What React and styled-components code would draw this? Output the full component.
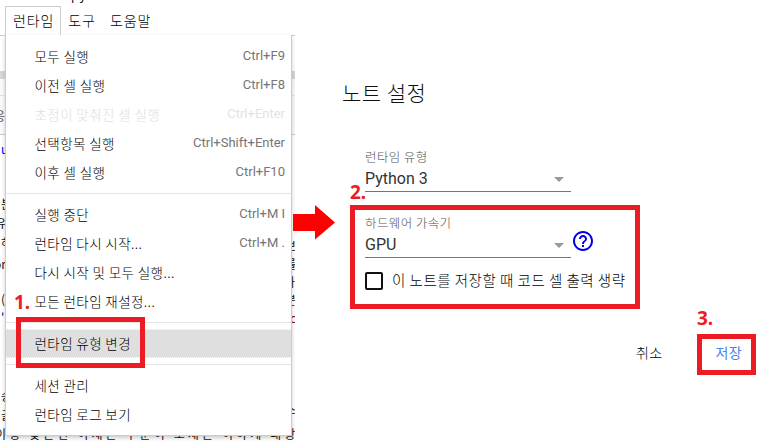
import React from "react";
import styled, { createGlobalStyle } from "styled-components";

const Global = createGlobalStyle`
  *{box-sizing:border-box}
  body{margin:0;background:#fff;overflow:hidden;font-family:Roboto,"Noto Sans CJK KR",sans-serif;font-size:13px;color:#212121}
`;
const Page = styled.main`
  position:relative;display:flex;width:759px;height:443px;overflow:hidden;background:#fff;
`;
const Korean = styled.span`
  font-family:"Noto Sans CJK KR",sans-serif;
  font-weight:${p => p.$weight || 300};
  font-size:${p => p.$size || 13.5}px;
  letter-spacing:${p => (p.$spacing === undefined ? 0.4 : p.$spacing)}px;
  white-space:nowrap;
`;
const Notebook = styled.section`
  position:relative;width:295px;height:443px;overflow:hidden;flex:none;
`;
const Backdrop = styled.div`
  position:absolute;inset:35px 0 0;border-top:1px solid #ccc;
`;
const Toolbar = styled.div`height:35px;`;
const Band = styled.div`height:8px;background:#d6d6d6;`;
const TabStrip = styled.div`height:56px;border-bottom:1px solid #ccc;background:#fafafa;padding-top:16px;`;
const TabLine = styled.div`border-top:1px solid #e4e4e4;`;
const CodeBit = styled.span`
  position:absolute;left:${p => p.$x}px;top:${p => p.$y}px;
  font:12px/14px "Noto Sans CJK KR",sans-serif;color:${p => p.$color || "#111"};white-space:nowrap;
  letter-spacing:${p => p.$spacing || 0}px;
`;
const TopBar = styled.nav`position:relative;display:flex;padding:6px 0 0 5px;height:36px;`;
const TopItem = styled.div`
  height:30px;line-height:26px;padding:0 6px 0 7px;color:#000;
  border:1px solid ${p => (p.$open ? "#ccc" : "transparent")};border-bottom:0;border-left-width:${p => (p.$open ? 1 : 0)}px;
  background:${p => (p.$open ? "#fff" : "none")};
`;
const Menu = styled.div`
  position:relative;width:287px;height:401px;margin:-1px 0 0 5px;padding:7px 0 6px;background:#fff;
  border:1px solid #ccc;border-top:0;box-shadow:0 2px 4px rgba(0,0,0,.2);
`;
const MenuItem = styled.div`
  display:flex;align-items:center;justify-content:space-between;height:29px;padding:0 6px 2px 28.5px;
  color:${p => (p.$disabled ? "#dedede" : "#000")};
  background:${p => (p.$active ? "#dfdfdf" : "transparent")};
  border:dotted ${p => (p.$active ? "#fff" : "transparent")};border-width:1px 0;
`;
const Shortcut = styled.span`font-size:13px;color:${p => (p.$disabled ? "#e2e2e2" : "#757575")};`;
const Divider = styled.div`height:1px;margin:6px 0;background:#e6e6e6;`;

const Dialog = styled.section`flex:1;display:flex;flex-direction:column;padding:76px 0 0 47px;`;
const Title = styled.h1`margin:0;height:32px;line-height:32px;font-weight:300;color:#111;`;
const Field = styled.div`
  width:206px;height:${p => p.$h}px;margin:${p => p.$top}px 0 0 23px;border-bottom:1px solid #757575;
`;
const FieldLabel = styled.div`height:18px;line-height:18px;color:#555;`;
const FieldValue = styled.div`
  display:flex;justify-content:space-between;align-items:center;height:25px;
  font-size:16px;color:#333;padding-right:7px;
`;
const Caret = styled.i`margin-top:2px;border:5px solid transparent;border-top-color:#999;border-bottom:0;`;
const FieldRow = styled.div`display:flex;align-items:flex-end;`;
const Help = styled.svg`width:24px;height:24px;margin:0 0 5px 0;`;
const CheckRow = styled.label`display:flex;align-items:center;gap:9px;margin:13px 0 0 23px;height:20px;line-height:17px;color:#000;`;
const CheckLabel = styled.span`padding-bottom:1px;`;
const Checkbox = styled.span`width:18px;height:18px;border:2px solid #111;border-radius:2px;flex:none;`;
const Actions = styled.div`display:flex;gap:53px;margin:51px 0 0 294px;height:20px;line-height:20px;`;
const Action = styled.span`color:${p => p.$color};`;

const Highlight = styled.div`
  position:absolute;left:${p => p.$x}px;top:${p => p.$y}px;width:${p => p.$w}px;height:${p => p.$h}px;
  border:5px solid #ed1c24;
`;
const Step = styled.div`
  position:absolute;left:${p => p.$x}px;top:${p => p.$y}px;color:#ed1c24;
  font:700 19px/20px "Noto Sans",sans-serif;
`;
const Arrow = styled.svg`position:absolute;left:293px;top:204px;width:42px;height:36px;`;

const groups = [
  [["모두 실행", "Ctrl+F9"], ["이전 셀 실행", "Ctrl+F8"], ["초점이 맞춰진 셀 실행", "Ctrl+Enter", "disabled"], ["선택항목 실행", "Ctrl+Shift+Enter"], ["이후 셀 실행", "Ctrl+F10"]],
  [["실행 중단", "Ctrl+M I"], ["런타임 다시 시작...", "Ctrl+M ."], ["다시 시작 및 모두 실행..."], ["모든 런타임 재설정..."]],
  [["런타임 유형 변경", "", "active"]],
  [["세션 관리"], ["런타임 로그 보기"]],
];

const codeBits = [
  [-6, 109, "응", "#555"], [1, 142, "u", "#00f"], [1, 197, "분"], [-5, 216, "유"], [1, 236, "하"], [-6, 257, "om"],
  [1, 292, "("], [1, 310, "'", "#00c"], [1, 389, "송"], [1, 408, "글"],
  [285, 239, "보"], [285, 257, "를"], [284, 275, "다"], [285, 293, "분"], [290, 311, "c", "#900"], [285, 403, "소"],
];

export default function App() {
  return (
    <Page>
      <Global />
      <Notebook>
        <Backdrop><Toolbar /><Band /><TabStrip><TabLine /></TabStrip></Backdrop>
        {codeBits.map(([x, y, text, color]) => <CodeBit key={`${x}-${y}`} $x={x} $y={y} $color={color}>{text}</CodeBit>)}
        <CodeBit $x={-5} $y={427} $spacing={3.1}>이상 맞은편 이재는 주문이 오재는 이하게 대상</CodeBit>
        <CodeBit $x={71} $y={-12} $spacing={1}>py</CodeBit>
        <TopBar>
          <TopItem $open><Korean $size={14} $spacing={0.9}>런타임</Korean></TopItem>
          <TopItem><Korean $size={14} $spacing={0.9}>도구</Korean></TopItem>
          <TopItem><Korean $size={14} $spacing={0.9}>도움말</Korean></TopItem>
        </TopBar>
        <Menu>
          {groups.map((group, i) => (
            <React.Fragment key={i}>
              {i > 0 && <Divider />}
              {group.map(([label, shortcut, state]) => (
                <MenuItem key={label} $disabled={state === "disabled"} $active={state === "active"}>
                  <Korean>{label}</Korean>
                  <Shortcut $disabled={state === "disabled"}>{shortcut}</Shortcut>
                </MenuItem>
              ))}
            </React.Fragment>
          ))}
        </Menu>
      </Notebook>
      <Dialog>
        <Title><Korean $size={21} $spacing={0.5}>노트 설정</Korean></Title>
        <Field $top={40} $h={44}>
          <FieldLabel><Korean $size={12.5} $spacing={0.4}>런타임 유형</Korean></FieldLabel>
          <FieldValue>Python 3<Caret /></FieldValue>
        </Field>
        <FieldRow>
          <Field $top={22} $h={44}>
            <FieldLabel><Korean $size={12.5} $spacing={0.4}>하드웨어 가속기</Korean></FieldLabel>
            <FieldValue>GPU<Caret /></FieldValue>
          </Field>
          <Help viewBox="0 0 24 24" fill="#0000e8">
            <path d="M11 18h2v-2h-2v2zm1-16C6.48 2 2 6.48 2 12s4.48 10 10 10 10-4.48 10-10S17.52 2 12 2zm0 18c-4.41 0-8-3.59-8-8s3.59-8 8-8 8 3.59 8 8-3.59 8-8 8zm0-14c-2.21 0-4 1.79-4 4h2c0-1.1.9-2 2-2s2 .9 2 2c0 2-3 1.75-3 5h2c0-2.25 3-2.5 3-5 0-2.21-1.79-4-4-4z" />
          </Help>
        </FieldRow>
        <CheckRow><Checkbox /><CheckLabel><Korean $size={14.5} $spacing={0.5}>이 노트를 저장할 때 코드 셀 출력 생략</Korean></CheckLabel></CheckRow>
        <Actions>
          <Action $color="#000"><Korean $size={14}>취소</Korean></Action>
          <Action $color="#4285f4"><Korean $size={14} $weight={400}>저장</Korean></Action>
        </Actions>
      </Dialog>
      <Arrow viewBox="0 0 42 36"><path d="M0 10h22V1l20 17.500-20 17V27H0z" fill="red" /></Arrow>
      <Highlight $x={16} $y={317} $w={129} $h={51} />
      <Highlight $x={350} $y={205} $w={290} $h={104} />
      <Highlight $x={697} $y={334} $w={59} $h={41} />
      <Step $x={14} $y={292}>1.</Step>
      <Step $x={350} $y={182}>2.</Step>
      <Step $x={697} $y={308}>3.</Step>
    </Page>
  );
}
